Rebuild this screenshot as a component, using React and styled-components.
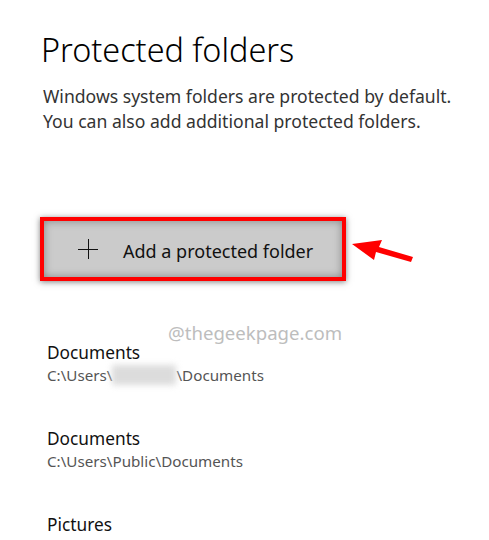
import React from "react";
import styled, { createGlobalStyle } from "styled-components";

const GlobalStyle = createGlobalStyle`
  html, body {
    margin: 0;
    padding: 0;
    background: #ffffff;
  }
  body {
    font-family: "Noto Sans", "Open Sans", sans-serif;
    color: #000;
  }
`;

const Page = styled.div`
  position: relative;
  width: 489px;
  height: 540px;
  overflow: hidden;
  padding: 29px 0 0 41px;
  box-sizing: border-box;
`;

const Title = styled.h1`
  margin: 0;
  font-size: 32.4px;
  line-height: 40px;
  font-weight: 300;
  color: #000;
`;

const Description = styled.p`
  margin: 15px 0 0 2px;
  font-size: 17.6px;
  line-height: 25px;
  color: #333;
`;

const ActionRow = styled.div`
  display: flex;
  align-items: center;
  margin: 83px 0 0 -1px;
`;

const Highlight = styled.div`
  border: 4px solid #ff0000;
  box-shadow: 0 1px 6px rgba(0, 0, 0, 0.5);
`;

const AddButton = styled.button`
  display: flex;
  align-items: center;
  width: 298px;
  height: 56px;
  padding: 3px 0 0 34px;
  border: none;
  background: #cbcbcb;
  box-shadow: inset 0 0 9px rgba(0, 0, 0, 0.35);
  font-family: inherit;
  font-size: 18px;
  color: #111;
  cursor: pointer;
`;

const PlusIcon = styled.svg`
  flex: none;
  margin: -3px 25px 0 0;
`;

const Arrow = styled.svg`
  margin-left: 6px;
  margin-top: 8px;
`;

const FolderList = styled.ul`
  list-style: none;
  margin: 60px 0 0 6px;
  padding: 0;
  display: flex;
  flex-direction: column;
  gap: 40px;
`;

const FolderItem = styled.li`
  display: flex;
  flex-direction: column;
`;

const FolderName = styled.span`
  font-size: 17.3px;
  line-height: 23px;
  color: #111;
`;

const FolderPath = styled.span`
  font-size: 15.2px;
  line-height: 23px;
  color: #555;
`;

const Redacted = styled.span`
  display: inline-block;
  vertical-align: middle;
  width: 64px;
  height: 20px;
  margin-top: -4px;
  background: #dcdcdc;
  filter: blur(3px);
`;

const Watermark = styled.div`
  position: absolute;
  left: 168px;
  top: 321px;
  font-size: 18.6px;
  line-height: 24px;
  color: #bdbdbd;
`;

const folders = [
  { name: "Documents", path: ["C:\\Users\\", true, "\\Documents"] },
  { name: "Documents", path: ["C:\\Users\\Public\\Documents"] },
  { name: "Pictures", path: [] },
];

export default function App() {
  return (
    <>
      <GlobalStyle />
      <Page>
        <Title>Protected folders</Title>
        <Description>
          Windows system folders are protected by default.
          <br />
          You can also add additional protected folders.
        </Description>
        <ActionRow>
          <Highlight>
            <AddButton>
              <PlusIcon width="20" height="20" viewBox="0 0 20 20">
                <path d="M0 10.5H20M10.5 0V20" stroke="#111" strokeWidth="1" />
              </PlusIcon>
              Add a protected folder
            </AddButton>
          </Highlight>
          <Arrow width="62" height="26" viewBox="0 0 62 26">
            <polygon points="0,4 30,0 27,7 61,17 59,22 24,12 22,20" fill="#ff0000" />
          </Arrow>
        </ActionRow>
        <FolderList>
          {folders.map((f, i) => (
            <FolderItem key={i}>
              <FolderName>{f.name}</FolderName>
              {f.path.length > 0 && (
                <FolderPath>
                  {f.path.map((p, j) =>
                    p === true ? <Redacted key={j} /> : <React.Fragment key={j}>{p}</React.Fragment>
                  )}
                </FolderPath>
              )}
            </FolderItem>
          ))}
        </FolderList>
        <Watermark>@thegeekpage.com</Watermark>
      </Page>
    </>
  );
}
